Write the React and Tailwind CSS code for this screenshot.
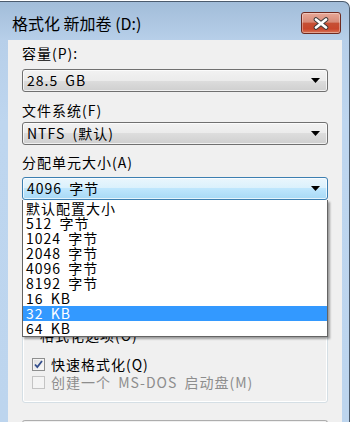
import { useState } from "react";

const sizes = [
  "默认配置大小",
  "512 字节",
  "1024 字节",
  "2048 字节",
  "4096 字节",
  "8192 字节",
  "16 KB",
  "32 KB",
  "64 KB",
];

const Arrow = () => (
  <svg width="9" height="5" viewBox="0 0 9 5" className="shrink-0">
    <path d="M0 0h9L4.5 5z" fill="#000" />
  </svg>
);

const Combo = ({ value, focused = false }) => (
  <div
    className={`h-[23px] flex items-center justify-between pl-[4px] pr-[7px] rounded-[3px] border ${
      focused
        ? "border-[#3c7fb1] bg-[linear-gradient(to_bottom,#eaf6fd_0%,#d9f0fc_50%,#bee6fd_50%,#a7d9f5_100%)]"
        : "border-[#707070] bg-[linear-gradient(to_bottom,#f2f2f2_0%,#ebebeb_50%,#dddddd_50%,#cfcfcf_100%)]"
    } shadow-[inset_0_0_0_1px_rgba(255,255,255,0.7)]`}
  >
    <span className="leading-[15px] [word-spacing:3px]">{value}</span>
    <Arrow />
  </div>
);

const Checkbox = ({ checked, disabled, label }) => (
  <div className="flex items-center gap-[6px] h-[15px]">
    <div
      className={`w-[13px] h-[13px] border flex items-center justify-center ${
        disabled
          ? "border-[#c4c4c4] bg-[#f4f4f4]"
          : "border-[#8e8f8f] bg-[linear-gradient(135deg,#dcdcdc,#fdfdfd)] shadow-[inset_0_0_0_1px_#f4f4f4]"
      }`}
    >
      {checked && (
        <svg width="9" height="9" viewBox="0 0 9 9">
          <path d="M1 4.5l2.3 2.6L8 1" fill="none" stroke="#334e8c" strokeWidth="1.8" />
        </svg>
      )}
    </div>
    <span
      className={`leading-[15px] [word-spacing:3px] ${disabled ? "text-[#8d8d8d]" : "text-black"}`}
    >
      {label}
    </span>
  </div>
);

export default function App() {
  const [selected] = useState(7);

  return (
    <div className="w-[353px] h-[422px] overflow-hidden bg-white font-['Noto_Sans_CJK_SC',sans-serif] text-black">
      <div className="mt-px w-[350px] h-[421px] border-t border-r border-[#4b5b6d] rounded-tr-[7px] bg-[linear-gradient(to_bottom,#a2bdd9_0px,#b7cfe9_38px,#bed6ef_120px,#bdd5ee_100%)] flex flex-col">
        {/* title bar */}
        <div className="h-[38px] shrink-0 flex items-start justify-between">
          <div className="pl-[12px] pt-[11px] text-[16px] leading-[20px] text-black">
            格式化 新加卷 (D:)
          </div>
          <div className="mt-[10px] mr-[8px] w-[40px] h-[22px] rounded-[3px] border border-[#6e2a20] bg-[linear-gradient(to_bottom,#e7a898_0%,#d88b78_45%,#c64f34_52%,#c9462b_80%,#d7765a_100%)] shadow-[inset_0_0_0_1px_rgba(255,255,255,0.35)] flex items-center justify-center">
            <svg width="16" height="13" viewBox="0 0 16 13">
              <path d="M3 2.5l10 8M13 2.5l-10 8" stroke="#3a3a3a" strokeWidth="4.6" strokeLinecap="round" />
              <path d="M3 2.5l10 8M13 2.5l-10 8" stroke="#fff" strokeWidth="2.8" strokeLinecap="round" />
            </svg>
          </div>
        </div>

        {/* body */}
        <div className="flex flex-1">
          <div className="w-[8px] shrink-0" />
          <div className="w-[334px] shrink-0 bg-[#f0f0f0] px-[14px] pt-[6px] flex flex-col text-[14px] tracking-[1px]">
            <div className="leading-[15px]">容量(P):</div>
            <div className="mt-[8px]">
              <Combo value="28.5 GB" />
            </div>

            <div className="mt-[11px] leading-[15px]">文件系统(F)</div>
            <div className="mt-[4px]">
              <Combo value="NTFS (默认)" />
            </div>

            <div className="mt-[10px] leading-[15px]">分配单元大小(A)</div>
            <div className="mt-[7px] relative z-10">
              <Combo value="4096 字节" focused />
              <div className="absolute top-full left-0 w-full bg-white border-x border-b border-[#646464] pt-px shadow-[2px_2px_2px_rgba(0,0,0,0.35)]">
                {sizes.map((s, i) => (
                  <div
                    key={s}
                    className={`h-[15px] leading-[15px] pl-[3px] [word-spacing:3px] ${
                      i === selected ? "bg-[#3399ff] text-white" : "text-black"
                    }`}
                  >
                    {s}
                  </div>
                ))}
              </div>
            </div>

            <fieldset className="mt-[128px] border border-[#d5dfe5] rounded-[3px] shadow-[inset_0_0_0_1px_#fff] pl-[9px] pb-[12px]">
              <legend className="ml-[6px] px-[2px] leading-[15px]">格式化选项(O)</legend>
              <div className="mt-[14px] flex flex-col gap-[3px]">
                <Checkbox checked label="快速格式化(Q)" />
                <Checkbox disabled label="创建一个 MS-DOS 启动盘(M)" />
              </div>
            </fieldset>

            <div className="mt-[17px] h-[10px] border-t border-x border-[#adadad] rounded-t-[3px]" />
          </div>
        </div>
      </div>
    </div>
  );
}
